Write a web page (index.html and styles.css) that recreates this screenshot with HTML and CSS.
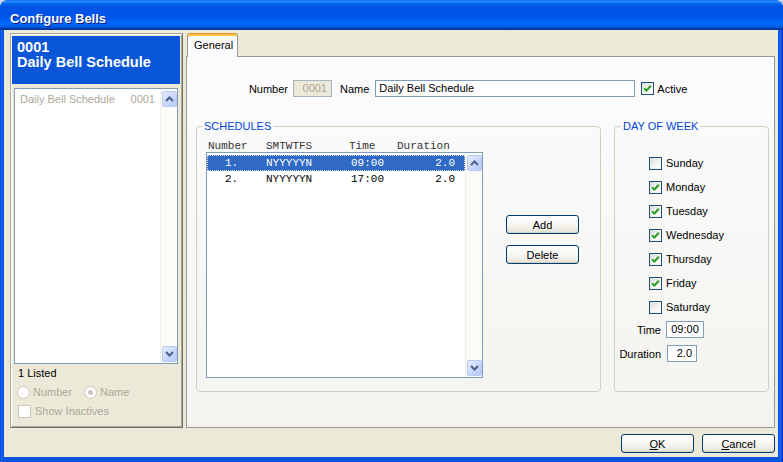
FILE: index.html
```html
<!DOCTYPE html>
<html>
<head>
<meta charset="utf-8">
<title>Configure Bells</title>
<link rel="stylesheet" href="styles.css">
</head>
<body>
<div class="window">
  <div class="titlebar"><span class="title">Configure Bells</span></div>
  <div class="client">
    <div class="main">
      <div class="side">
        <div class="side-head">
          <div>0001</div>
          <div>Daily Bell Schedule</div>
        </div>
        <div class="side-list">
          <div class="side-items">
            <div class="side-item"><span>Daily Bell Schedule</span><span>0001</span></div>
          </div>
          <div class="vscroll">
            <div class="sbtn"><svg width="9" height="6" viewBox="0 0 9 6"><path d="M1 5 L4.5 1.5 L8 5" fill="none" stroke="#4D6185" stroke-width="2"/></svg></div>
            <div class="track"></div>
            <div class="sbtn"><svg width="9" height="6" viewBox="0 0 9 6"><path d="M1 1 L4.5 4.5 L8 1" fill="none" stroke="#4D6185" stroke-width="2"/></svg></div>
          </div>
        </div>
        <div class="listed">1 Listed</div>
        <div class="radios">
          <span class="ropt first"><span class="radio"></span>Number</span>
          <span class="ropt"><span class="radio on"></span>Name</span>
        </div>
        <div class="inactive"><span class="cbox dis"></span>Show Inactives</div>
      </div>
      <div class="tabctl">
        <div class="tabstrip"><div class="tab">General</div></div>
        <div class="tabpage">
          <div class="idrow">
            <span class="lbl-num">Number</span>
            <span class="field dis num">0001</span>
            <span class="lbl-name">Name</span>
            <span class="field name">Daily Bell Schedule</span>
            <span class="cbox on"><svg width="11" height="11" viewBox="0 0 11 11"><path d="M2.2 5.2 L4.4 7.6 L8.8 2.8" fill="none" stroke="#21A121" stroke-width="2"/></svg></span>
            <span class="active-lbl">Active</span>
          </div>
          <div class="groups">
            <fieldset class="grp sched">
              <legend>SCHEDULES</legend>
              <div class="sched-body">
                <div class="sched-col">
                  <div class="sched-head mono"><span class="h1">Number</span><span class="h2">SMTWTFS</span><span class="h3">Time</span><span>Duration</span></div>
                  <div class="sched-list">
                    <div class="sched-rows mono">
                      <div class="srow sel"><span class="c1">1.</span><span class="c2">NYYYYYN</span><span class="c3">09:00</span><span class="c4">2.0</span></div>
                      <div class="srow"><span class="c1">2.</span><span class="c2">NYYYYYN</span><span class="c3">17:00</span><span class="c4">2.0</span></div>
                    </div>
                    <div class="vscroll s2">
                      <div class="sbtn"><svg width="9" height="6" viewBox="0 0 9 6"><path d="M1 5 L4.5 1.5 L8 5" fill="none" stroke="#4D6185" stroke-width="2"/></svg></div>
                      <div class="track"></div>
                      <div class="sbtn"><svg width="9" height="6" viewBox="0 0 9 6"><path d="M1 1 L4.5 4.5 L8 1" fill="none" stroke="#4D6185" stroke-width="2"/></svg></div>
                    </div>
                  </div>
                </div>
                <div class="sched-btns">
                  <button class="btn">Add</button>
                  <button class="btn">Delete</button>
                </div>
              </div>
            </fieldset>
            <fieldset class="grp dow">
              <legend>DAY OF WEEK</legend>
              <div class="dow-body">
                <div class="day"><span class="cbox"></span>Sunday</div>
                <div class="day"><span class="cbox on"><svg width="11" height="11" viewBox="0 0 11 11"><path d="M2.2 5.2 L4.4 7.6 L8.8 2.8" fill="none" stroke="#21A121" stroke-width="2"/></svg></span>Monday</div>
                <div class="day"><span class="cbox on"><svg width="11" height="11" viewBox="0 0 11 11"><path d="M2.2 5.2 L4.4 7.6 L8.8 2.8" fill="none" stroke="#21A121" stroke-width="2"/></svg></span>Tuesday</div>
                <div class="day"><span class="cbox on"><svg width="11" height="11" viewBox="0 0 11 11"><path d="M2.2 5.2 L4.4 7.6 L8.8 2.8" fill="none" stroke="#21A121" stroke-width="2"/></svg></span>Wednesday</div>
                <div class="day"><span class="cbox on"><svg width="11" height="11" viewBox="0 0 11 11"><path d="M2.2 5.2 L4.4 7.6 L8.8 2.8" fill="none" stroke="#21A121" stroke-width="2"/></svg></span>Thursday</div>
                <div class="day"><span class="cbox on"><svg width="11" height="11" viewBox="0 0 11 11"><path d="M2.2 5.2 L4.4 7.6 L8.8 2.8" fill="none" stroke="#21A121" stroke-width="2"/></svg></span>Friday</div>
                <div class="day"><span class="cbox"></span>Saturday</div>
                <div class="trow time"><span class="tlbl">Time</span><span class="field tval">09:00</span></div>
                <div class="trow dur"><span class="tlbl">Duration</span><span class="field dval">2.0</span></div>
              </div>
            </fieldset>
          </div>
        </div>
      </div>
    </div>
    <div class="footer">
      <button class="btn big"><u>O</u>K</button>
      <button class="btn big"><u>C</u>ancel</button>
    </div>
  </div>
</div>
</body>
</html>
```

FILE: styles.css
```css
* { box-sizing: border-box; }
html, body { margin: 0; padding: 0; }
body {
  background: #C9D3E4;
  font-family: "Liberation Sans", Arial, sans-serif;
  font-size: 11px;
  color: #000;
}
.window {
  width: 783px;
  height: 462px;
  display: flex;
  flex-direction: column;
  border-radius: 8px 8px 0 0;
  overflow: hidden;
  background: linear-gradient(to right, #0831D9 0, #166AEE 1px, #0855DD 3px, #0855DD 779px, #166AEE 781px, #0831D9 782px);
}
.titlebar {
  height: 30px;
  flex: none;
  display: flex;
  align-items: center;
  padding: 7px 0 0 10px;
  background: linear-gradient(to bottom, #0058EE 0%, #3593FF 4%, #288EFF 6%, #127DFF 8%, #036FFC 10%, #0262EE 14%, #0057E5 20%, #0054E3 24%, #0055EB 56%, #005BF5 66%, #026AFE 76%, #0062EF 86%, #0052D6 92%, #0040AB 94%, #003092 100%);
}
.title {
  color: #fff;
  font-weight: bold;
  font-size: 13px;
  text-shadow: 1px 1px 0 #0A1883;
}
.client {
  margin: 0 5px 5px 4px;
  height: 427px;
  background: #ECE9D8;
  display: flex;
  flex-direction: column;
}
.main {
  display: flex;
  gap: 3px;
  padding: 3px 3px 0 6px;
  height: 398px;
}
/* ---------- left side ---------- */
.side {
  width: 173px;
  height: 395px;
  border: 1px solid;
  border-color: #ACA899 #716F64 #716F64 #ACA899;
  box-shadow: inset 1px 1px 0 #fff, inset -1px -1px 0 #ACA899;
  display: flex;
  flex-direction: column;
}
.side-head {
  margin: 2px 2px 0 1px;
  height: 48px;
  background: #0A56D8;
  color: #fff;
  font-weight: bold;
  font-size: 14.5px;
  line-height: 15px;
  padding: 4px 0 0 5px;
}
.side-list {
  margin: 4px 4px 0 3px;
  height: 276px;
  border: 1px solid #7F9DB9;
  background: #fff;
  display: flex;
}
.side-items {
  flex: 1;
  padding: 2px 5px 0 5px;
}
.side-item {
  height: 16px;
  line-height: 16px;
  display: flex;
  justify-content: space-between;
  color: #ACA899;
}
.vscroll {
  width: 17px;
  display: flex;
  flex-direction: column;
  background: #FBFBF8;
  border-left: 1px solid #F0EFE8;
  padding: 2px 0 1px 1px;
}
.vscroll.s2 { padding-top: 2px; }
.sbtn {
  width: 15px;
  height: 16px;
  border: 1px solid #B7CAF5;
  border-radius: 2px;
  background: linear-gradient(135deg, #E6EEFF 0%, #C8D8FC 55%, #B4C8F7 100%);
  display: flex;
  align-items: center;
  justify-content: center;
}
.track { flex: 1; }
.listed {
  margin-top: 2px;
  padding-left: 7px;
  height: 14px;
  line-height: 14px;
}
.radios {
  margin-top: 5px;
  height: 14px;
  display: flex;
  align-items: center;
  padding-left: 6px;
  color: #ACA899;
}
.ropt { display: flex; align-items: center; }
.ropt.first { width: 67px; }
.radio {
  width: 13px;
  height: 13px;
  border: 1px solid #CAC8BB;
  border-radius: 50%;
  background: #fff;
  margin-right: 3px;
  display: flex;
  align-items: center;
  justify-content: center;
}
.radio.on::after {
  content: "";
  width: 5px;
  height: 5px;
  border-radius: 50%;
  background: #CAC8BB;
}
.inactive {
  margin-top: 5px;
  height: 14px;
  display: flex;
  align-items: center;
  padding-left: 7px;
  color: #ACA899;
}
.cbox {
  width: 13px;
  height: 13px;
  flex: none;
  border: 1px solid #1C5180;
  background: linear-gradient(135deg, #DCDCD7 0%, #F3F3EF 50%, #FFFFFF 100%);
  margin-right: 4px;
  display: inline-flex;
  align-items: center;
  justify-content: center;
}
.cbox.dis { border-color: #CAC8BB; background: #fff; }
/* ---------- tab control ---------- */
.tabctl {
  flex: 1;
  display: flex;
  flex-direction: column;
}
.tabstrip {
  height: 23px;
  padding-left: 1px;
  display: flex;
  align-items: flex-start;
}
.tab {
  position: relative;
  z-index: 1;
  width: 51px;
  height: 24px;
  border: 1px solid #919B9C;
  border-bottom: none;
  border-top: 1px solid #E68B2C;
  border-radius: 3px 3px 0 0;
  box-shadow: inset 0 2px 0 #FFC73C;
  background: #FCFCFE;
  padding: 5px 0 0 6px;
}
.tabpage {
  height: 372px;
  border: 1px solid #919B9C;
  background: linear-gradient(to bottom, #FCFCFE, #F4F3EE);
}
.idrow {
  margin-top: 23px;
  height: 17px;
  display: flex;
  align-items: center;
  padding-left: 53px;
}
.lbl-num { width: 48px; text-align: right; margin-right: 5px; }
.field {
  height: 17px;
  border: 1px solid #7F9DB9;
  background: #fff;
  line-height: 15px;
  padding: 0 3px;
  white-space: nowrap;
}
.field.dis { background: #ECE9D8; color: #ACA899; border-color: #A5B4C5; }
.field.num { width: 39px; text-align: right; padding-right: 4px; }
.lbl-name { margin-left: 8px; margin-right: 6px; }
.field.name { width: 260px; }
.idrow .cbox { margin-left: 6px; margin-right: 3px; }
.groups {
  margin-top: 23px;
  display: flex;
  gap: 13px;
  padding-left: 9px;
}
.grp {
  margin: 0;
  padding: 0;
  height: 272px;
  border: 1px solid #D0D0BF;
  border-radius: 4px;
  min-width: 0;
}
.grp legend {
  color: #0046D5;
  padding: 0 2px;
  margin-left: 5px;
  line-height: 13px;
}
.grp.dow legend { margin-left: 6px; }
.grp.sched { width: 405px; }
.grp.dow { width: 155px; }
.sched-body {
  display: flex;
  padding: 7px 0 0 9px;
}
.mono { font-family: "Liberation Mono", "Courier New", monospace; font-size: 11px; }
.sched-head {
  height: 12px;
  line-height: 12px;
  padding-left: 2px;
  display: flex;
  color: #333;
}
.sched-head .h1 { width: 58px; }
.sched-head .h2 { width: 83px; }
.sched-head .h3 { width: 48px; }
.sched-list {
  width: 277px;
  height: 226px;
  border: 1px solid #7F9DB9;
  background: #fff;
  display: flex;
}
.sched-rows { flex: 1; padding-top: 2px; }
.srow {
  height: 16px;
  line-height: 16px;
  display: flex;
}
.srow.sel {
  background: #316AC5;
  color: #fff;
  outline: 1px dotted #D8DEE8;
  outline-offset: -1px;
}
.srow .c1 { width: 59px; padding-left: 18px; }
.srow .c2 { width: 85px; }
.srow .c3 { width: 50px; }
.srow .c4 { flex: 1; text-align: right; padding-right: 10px; }
.sched-btns {
  margin-left: 23px;
  margin-top: 75px;
  display: flex;
  flex-direction: column;
  gap: 11px;
}
.btn {
  width: 73px;
  height: 19px;
  padding: 0;
  font-family: "Liberation Sans", Arial, sans-serif;
  font-size: 11px;
  color: #000;
  border: 1px solid #003C74;
  border-radius: 3px;
  background: linear-gradient(to bottom, #FFFFFF 0%, #F5F4EF 60%, #E8E6DC 90%, #D6D0C5 100%);
  box-shadow: inset 0 -1px 0 #D6D0C5;
}
.dow-body { padding-top: 18px; }
.day {
  height: 24px;
  display: flex;
  align-items: center;
  padding-left: 34px;
}
.trow { display: flex; align-items: center; height: 17px; }
.trow.time { margin-top: 2px; }
.trow.dur { margin-top: 7px; }
.tlbl { width: 46px; text-align: right; margin-right: 5px; }
.trow.dur .tlbl { margin-right: 6px; }
.field.tval { width: 38px; text-align: center; padding: 0; }
.field.dval { width: 30px; text-align: right; padding-right: 4px; }
/* ---------- footer ---------- */
.footer {
  flex: 1;
  display: flex;
  justify-content: flex-end;
  gap: 8px;
  padding: 6px 3px 0 0;
}
```
